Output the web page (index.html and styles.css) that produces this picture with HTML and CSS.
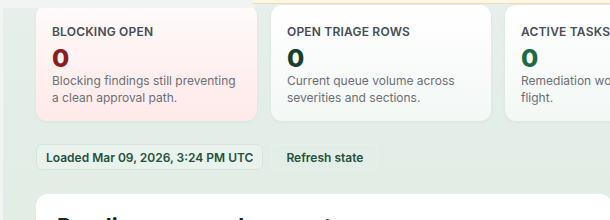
FILE: index.html
```html
<!DOCTYPE html>
<html>
<head>
<meta charset="utf-8">
<link rel="stylesheet" href="styles.css">
</head>
<body>
<div class="page">
  <div class="remnant-left"></div>
  <div class="remnant-right"></div>
  <div class="stats">
    <div class="card card-red">
      <div class="label">BLOCKING OPEN</div>
      <div class="value value-red">0</div>
      <div class="desc">Blocking findings still preventing a clean approval path.</div>
    </div>
    <div class="card card-green">
      <div class="label">OPEN TRIAGE ROWS</div>
      <div class="value value-dark">0</div>
      <div class="desc">Current queue volume across severities and sections.</div>
    </div>
    <div class="card card-green">
      <div class="label">ACTIVE TASKS</div>
      <div class="value value-green">0</div>
      <div class="desc">Remediation work items still in flight.</div>
    </div>
  </div>
  <div class="toolbar">
    <div class="pill">Loaded Mar 09, 2026, 3:24 PM UTC</div>
    <button class="refresh">Refresh state</button>
  </div>
  <div class="panel">
    <h2 class="panel-title">Pending approval requests</h2>
  </div>
</div>
</body>
</html>
```
FILE: styles.css
```css
html, body {
  margin: 0;
  padding: 0;
  width: 610px;
  height: 220px;
  overflow: hidden;
  background: #e4eee8;
  font-family: Inter, "Noto Sans", sans-serif;
}
.page {
  position: relative;
  padding: 5px 0 0 33px;
  border-left: 3px solid #f0f4f2;
  height: 220px;
  box-sizing: border-box;
  background: linear-gradient(180deg, #e6efea 0%, #e2ede6 100%);
}
.remnant-left {
  position: absolute;
  left: -3px;
  top: 0;
  width: 255px;
  height: 8px;
  background: #f1f4f3;
  z-index: 2;
}
.remnant-right {
  position: absolute;
  left: 248px;
  top: 0;
  width: 400px;
  height: 3px;
  background: #fcf6e8;
  border-bottom: 1px solid #f1dcb0;
  border-bottom-left-radius: 6px;
  z-index: 2;
}
.stats {
  display: grid;
  grid-template-columns: 221px 220px 221px;
  gap: 14px;
  width: 700px;
}
.card {
  height: 116px;
  box-sizing: border-box;
  border-radius: 11px;
  padding: 19px 16px 0 16px;
  box-shadow: 0 1px 3px rgba(30, 60, 45, 0.06);
}
.card-red {
  background: linear-gradient(180deg, #fffafa 0%, #ffe9e9 100%);
}
.card-green {
  background: linear-gradient(180deg, #ffffff 0%, #f3f8f5 100%);
}
.label {
  font-size: 12px;
  font-weight: 600;
  color: #474d55;
  letter-spacing: 0.2px;
  line-height: 16px;
}
.value {
  font-size: 25px;
  font-weight: 800;
  line-height: 26px;
  margin-top: 5px;
}
.value-red { color: #8b1d1f; }
.value-dark { color: #173f2c; }
.value-green { color: #1f6a46; }
.desc {
  font-size: 12px;
  color: #6b6f76;
  line-height: 17px;
  margin-top: 1px;
}
.toolbar {
  display: flex;
  align-items: center;
  gap: 8px;
  margin-top: 23px;
}
.pill {
  height: 26px;
  box-sizing: border-box;
  padding: 0 9px;
  display: flex;
  align-items: center;
  border: 1px solid #d6e5db;
  border-radius: 6px;
  background: #e9f2ec;
  font-size: 12px;
  font-weight: 600;
  color: #24513a;
}
.refresh {
  height: 26px;
  padding: 0 14px;
  border: 1px solid rgba(255, 255, 255, 0.18);
  border-radius: 6px;
  background: transparent;
  font-family: Inter, "Noto Sans", sans-serif;
  font-size: 12px;
  font-weight: 600;
  color: #24513a;
}
.panel {
  margin-top: 24px;
  width: 576px;
  height: 60px;
  background: #ffffff;
  border-radius: 12px;
  padding: 19px 21px 0 21px;
  box-sizing: border-box;
}
.panel-title {
  margin: 0;
  font-size: 22px;
  font-weight: 700;
  color: #1b2a22;
  line-height: 26px;
}
```
